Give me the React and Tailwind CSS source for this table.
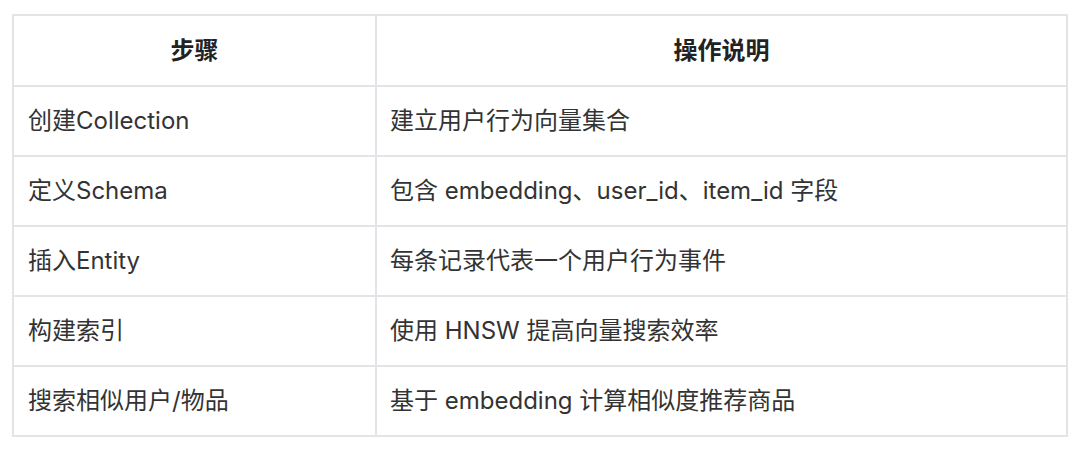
import React from "react";

const rows = [
  ["创建Collection", "建立用户行为向量集合"],
  ["定义Schema", "包含 embedding、user_id、item_id 字段"],
  ["插入Entity", "每条记录代表一个用户行为事件"],
  ["构建索引", "使用 HNSW 提高向量搜索效率"],
  ["搜索相似用户/物品", "基于 embedding 计算相似度推荐商品"],
];

export default function App() {
  return (
    <div
      className="w-[1080px] h-[451px] bg-white pl-3 pt-[14px]"
      style={{ fontFamily: '"Inter", "Noto Sans CJK SC", sans-serif' }}
    >
      <table className="w-[1056px] border-collapse text-[24px] text-[#333]">
        <thead>
          <tr className="h-[71px]">
            <th className="w-[363px] border-2 border-[#e3e3e8] font-semibold text-[#222]">步骤</th>
            <th className="border-2 border-[#e3e3e8] font-semibold text-[#222]">操作说明</th>
          </tr>
        </thead>
        <tbody>
          {rows.map(([step, desc]) => (
            <tr key={step} className="h-[70px]">
              <td className="border-2 border-[#e3e3e8] pl-[14px]">{step}</td>
              <td className="border-2 border-[#e3e3e8] pl-[13px]">{desc}</td>
            </tr>
          ))}
        </tbody>
      </table>
    </div>
  );
}
